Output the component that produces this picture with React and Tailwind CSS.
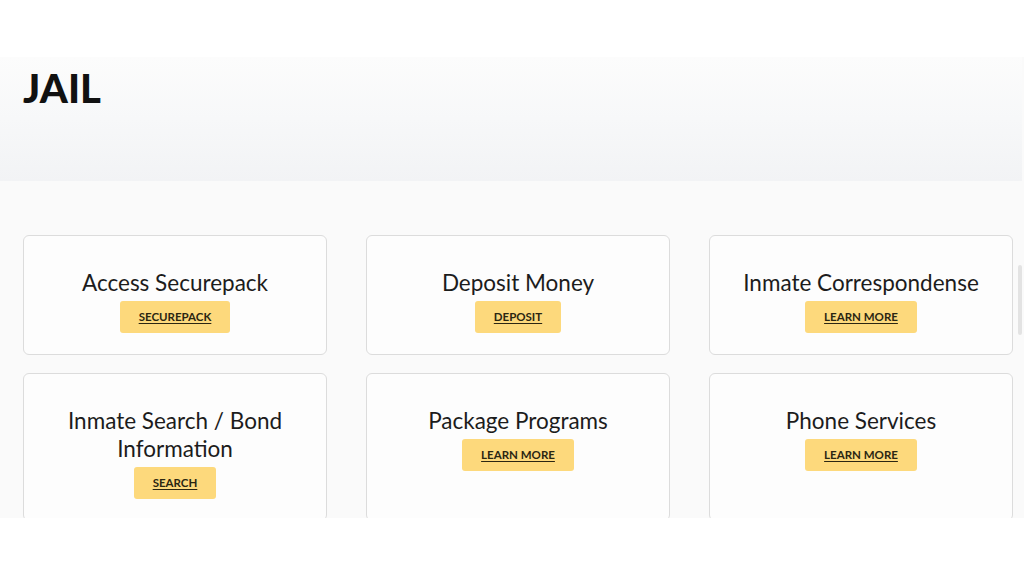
import React from 'react';

const services = [
  {title: 'Access Securepack', action: 'SECUREPACK'},
  {title: 'Deposit Money', action: 'DEPOSIT'},
  {title: 'Inmate Correspondense', action: 'LEARN MORE'},
  {title: 'Inmate Search / Bond Information', action: 'SEARCH'},
  {title: 'Package Programs', action: 'LEARN MORE'},
  {title: 'Phone Services', action: 'LEARN MORE'}
];

const ServiceCard = ({title, action}) => (
  <div className="min-h-[120px] rounded-md border border-[#dcdcdc] bg-[#fdfdfd] flex flex-col items-center pt-[33px] pb-[21px] px-[20px] text-center">
    <h3 className="text-[22.5px] leading-[28px] text-[#1c1c1c]">{title}</h3>
    <a
      href="#"
      className="mt-[4px] h-[32px] px-[19px] flex items-center rounded-[3px] bg-[#fdd97c] text-[11.5px] font-bold text-[#2b2612] underline underline-offset-2"
    >
      {action}
    </a>
  </div>
);

const App = () => {
  return (
    <div className="w-[1024px] h-[576px] bg-white overflow-hidden" style={{fontFamily: 'Lato, "Open Sans", sans-serif'}}>
      <div className="h-[57px]" />
      <div className="relative h-[461px] overflow-hidden bg-[#fafafa]">
        <header className="h-[124px] bg-gradient-to-b from-[#fcfcfc] via-[#f7f8f9] to-[#f2f3f5] px-[23px] pt-[7px] mr-[2px]">
          <h1 className="text-[40px] leading-[48px] font-black text-[#111]">JAIL</h1>
        </header>

        <div className="w-[990px] ml-[23px] pt-[54px] grid grid-cols-3 gap-x-[39px] gap-y-[18px]">
          {services.map(s => (
            <ServiceCard key={s.title} {...s} />
          ))}
        </div>

        {/* scrollbar thumb */}
        <div className="absolute right-[2px] top-[208px] w-[4px] h-[70px] rounded-full bg-[#e3e3e3]" />
      </div>
    </div>
  );
};

export default App;
